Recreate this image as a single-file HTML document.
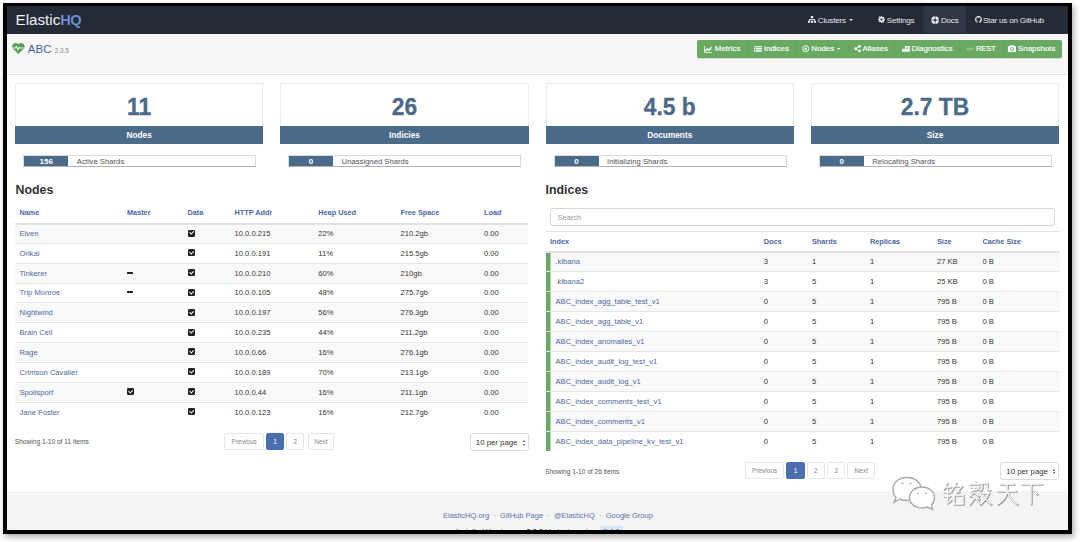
<!DOCTYPE html>
<html><head><meta charset="utf-8">
<style>
*{box-sizing:border-box;margin:0;padding:0}
html,body{width:1080px;height:542px;overflow:hidden;background:#fff;font-family:"Liberation Sans",sans-serif;}
.abs{position:absolute}
#frame{position:absolute;left:3px;top:2.6px;width:1069px;height:531px;background:#000;box-shadow:2px 3px 6px rgba(0,0,0,.33)}
#page{position:absolute;left:6.5px;top:6px;width:1061.5px;height:524px;background:#fff;overflow:hidden}
/* page coordinates are relative to #page, so subtract 6.5 */
#nav{position:absolute;left:0;top:0;width:100%;height:28px;background:#242b37}
#logo{position:absolute;left:9px;top:5.3px;font-size:15.2px;color:#eef0f3;letter-spacing:0}
#logo b{color:#6b8dd0;letter-spacing:-0.5px;font-size:14.6px}
.nv{position:absolute;top:0;height:28px;line-height:29.2px;font-size:8.1px;letter-spacing:-.2px;color:#e4e6ea;white-space:nowrap}
#subnav{position:absolute;left:0;top:28px;width:100%;height:40.5px;background:#f7f7f8;border-bottom:1px solid #e5e5e5}
#abc{position:absolute;left:21.3px;top:8.7px;font-size:11.5px;color:#4b5f96;white-space:nowrap}
#abc small{font-size:6.4px;color:#888;letter-spacing:0}
#btns{position:absolute;left:690.5px;top:33.5px;width:365px;height:18px;background:#69a962;border-radius:2px;box-shadow:0 1px 0 rgba(0,0,0,.12)}
.bt{position:absolute;top:0;height:18px;line-height:18.6px;font-size:7.95px;color:#fff;white-space:nowrap;-webkit-text-stroke:.15px #fff}
.dv{position:absolute;top:0;width:1px;height:18px;background:#65a35e}
.card{position:absolute;top:76.5px;width:248.3px;height:61px;border:1px solid #e6ecf0;background:#fff}
.card .num{position:absolute;left:0;right:0;top:9.4px;text-align:center;font-weight:bold;font-size:22.8px;color:#4a6a8a;transform:scaleY(1.08);-webkit-text-stroke:0.3px #4a6a8a}
.card .tt{position:absolute;left:-1px;right:-1px;top:41.5px;height:18.5px;line-height:18px;text-align:center;font-weight:bold;font-size:8.3px;color:#fff;background:#4b6b8b}
.prog{position:absolute;top:148.5px;width:233px;height:12px;border:1px solid #dcdcdc;border-bottom-color:#b4b4b4;background:#fff;font-size:7.7px;line-height:11px;color:#555;white-space:nowrap}
.prog .fill{position:absolute;left:0;top:0;width:44px;height:10px;line-height:11.5px;font-size:8px;background:#4b6b8b;color:#fff;text-align:center;font-weight:bold}
.prog .lbl{position:absolute;top:0}
h2{position:absolute;font-size:12.4px;font-weight:bold;color:#333;top:176.6px}
table{position:absolute;border-collapse:collapse;font-size:7.6px;color:#333}
th{font-weight:bold;color:#4a68a8;text-align:left;height:0;padding:0;font-size:7.3px}
td{padding:0;height:20px;vertical-align:middle;border-top:1px solid #e7e7e7}
tr.s td{background:#f9f9f9}
a{color:#4e67a0;text-decoration:none}
.chk{display:inline-block;width:7px;height:7px;background:#222;border-radius:1.2px;position:relative;vertical-align:middle;top:-1.1px;margin-left:0.3px}
.chk:after{content:"";position:absolute;left:2.2px;top:0.9px;width:1.8px;height:3.4px;border:solid #fff;border-width:0 1.1px 1.1px 0;transform:rotate(45deg)}
.dash{display:inline-block;width:6.4px;height:2px;background:#222;vertical-align:middle;position:relative;top:-1px;margin-left:-0.3px;border-radius:.5px}
.pg{position:absolute;height:17px;border:1px solid #e6e6e6;border-radius:2px;background:#fff;color:#888;font-size:6.5px;line-height:15px;text-align:center}
.pg.act{background:#4a6fae;border-color:#4a6fae;color:#fff}
.sel{position:absolute;height:18.5px;border:1px solid #dcdcdc;border-radius:3px;background:#fff;font-size:7.8px;line-height:18px;color:#333;padding-left:5px}
.showing{position:absolute;font-size:6.6px;color:#555;margin-top:.6px}
#footer{position:absolute;left:0;top:484.5px;width:100%;height:40px;background:#f4f4f4}
.search{position:absolute;border:1px solid #d8d8d8;border-radius:2px;background:#fff;color:#999;font-size:7.5px;line-height:17px;padding-left:6.5px}
td.g{box-shadow:inset 4.5px 0 0 #6aaa63;padding-left:10px}
td,th{padding-left:4.5px}
#nt th{height:22px;border-bottom:2px solid #e2e2e2;vertical-align:middle}
#it th{height:21px;border-top:1px solid #e2e2e2;border-bottom:2px solid #e2e2e2;vertical-align:middle}
.car{position:absolute;right:1.5px;top:6px;width:3.2px;height:5.8px}
.car:before,.car:after{content:"";position:absolute;left:0;border-left:1.6px solid transparent;border-right:1.6px solid transparent}
.car:before{top:0;border-bottom:2.5px solid #444}
.car:after{bottom:0;border-top:2.5px solid #444}
.flinks{position:absolute;left:436.5px;top:20px;font-size:7.5px;color:#777;white-space:nowrap}
.flinks a{color:#5a76b0}
.fver{position:absolute;left:449.5px;top:36px;font-size:7.5px;color:#333;white-space:nowrap}
.badge{background:#d9e6f5;color:#5a76b0;padding:1px 3px;border-radius:2px}
#it tr:nth-child(2) td{height:19px}
#nt td{height:19.85px}
</style></head><body>
<div id="frame"></div>
<div id="page">
  <div id="nav">
    <div id="logo">Elastic<b>HQ</b></div>
    <svg class="abs" style="left:801.6px;top:10.4px" width="8" height="7" viewBox="0 0 8 7"><g fill="#e4e6ea"><rect x="2.8" y="0" width="2.4" height="2"/><rect x="3.6" y="2" width="0.8" height="1.6"/><rect x="1" y="3.2" width="6" height="0.8"/><rect x="1" y="3.2" width="0.8" height="1.4"/><rect x="6.2" y="3.2" width="0.8" height="1.4"/><rect x="0" y="4.6" width="2.2" height="2.2"/><rect x="2.9" y="4.6" width="2.2" height="2.2"/><rect x="5.8" y="4.6" width="2.2" height="2.2"/></g></svg>
    <div class="nv" style="left:811.3px">Clusters</div>
    <svg class="abs" style="left:842.5px;top:13.2px" width="4.2" height="2" viewBox="0 0 4 2"><path d="M0 0H4L2 2Z" fill="#e4e6ea"/></svg>
    <svg class="abs" style="left:871.5px;top:10.4px" width="7" height="7" viewBox="0 0 14 14"><g fill="#e4e6ea"><path d="M6 0h2l.4 2a5 5 0 0 1 1.6.7l1.7-1.2 1.4 1.4-1.2 1.7A5 5 0 0 1 12 6.2l2 .4v2l-2 .4a5 5 0 0 1-.7 1.6l1.2 1.7-1.4 1.4-1.7-1.2a5 5 0 0 1-1.6.7L8 14H6l-.4-2a5 5 0 0 1-1.6-.7l-1.7 1.2-1.4-1.4 1.2-1.7A5 5 0 0 1 2 8L0 7.6v-2L2 5.2a5 5 0 0 1 .7-1.6L1.5 1.9 2.9.5l1.7 1.2A5 5 0 0 1 6.2 1z"/></g><circle cx="7" cy="7" r="2.2" fill="#232a36"/></svg>
    <div class="nv" style="left:880.3px">Settings</div>
    <div class="abs" style="left:916px;top:0;width:43.7px;height:27px;background:#2f3746"></div>
    <svg class="abs" style="left:924.4px;top:9.6px" width="8.2" height="8.2" viewBox="0 0 16 16"><circle cx="8" cy="8" r="7.6" fill="#e8eaee"/><g fill="#2f3746" opacity=".75"><rect x="7.2" y="0" width="1.6" height="16"/><rect x="0" y="7.2" width="16" height="1.6"/></g><circle cx="8" cy="8" r="2.3" fill="#2f3746"/></svg>
    <div class="nv" style="left:934.4px">Docs</div>
    <svg class="abs" style="left:968.2px;top:10.2px" width="7" height="7" viewBox="0 0 16 16"><path fill="#e4e6ea" d="M8 0C3.58 0 0 3.58 0 8c0 3.54 2.29 6.53 5.47 7.59.4.07.55-.17.55-.38 0-.19-.01-.82-.01-1.49-2.01.37-2.53-.49-2.69-.94-.09-.23-.48-.94-.82-1.13-.28-.15-.68-.52-.01-.53.63-.01 1.08.58 1.23.82.72 1.21 1.87.87 2.33.66.07-.52.28-.87.51-1.07-1.78-.2-3.64-.89-3.64-3.95 0-.87.31-1.59.82-2.15-.08-.2-.36-1.02.08-2.12 0 0 .67-.21 2.2.82.64-.18 1.32-.27 2-.27.68 0 1.36.09 2 .27 1.53-1.04 2.2-.82 2.2-.82.44 1.1.16 1.92.08 2.12.51.56.82 1.27.82 2.15 0 3.07-1.87 3.75-3.65 3.95.29.25.54.73.54 1.48 0 1.07-.01 1.93-.01 2.2 0 .21.15.46.55.38A8.013 8.013 0 0016 8c0-4.42-3.58-8-8-8z"/></svg>
    <div class="nv" style="left:976.4px">Star us on GitHub</div>
  </div>
  <div id="subnav">
    <svg class="abs" style="left:5.4px;top:8.8px" width="12.7" height="11" viewBox="0 0 24 21"><path fill="#5c9d5a" d="M12 21 2.2 11.6C-.8 8.6-.6 3.8 2.6 1.4 5.4-.7 9.6-.2 12 2.6 14.4-.2 18.6-.7 21.4 1.4c3.2 2.4 3.4 7.2.4 10.2z"/><path d="M1 9.5h5.5l1.8-3.5 2.8 7.5 2.4-5.5 1.4 1.5h7.6" fill="none" stroke="#e4f5e2" stroke-width="2" stroke-linejoin="round"/></svg>
    <div id="abc">ABC <small>2.3.5</small></div>
  </div>
  <div id="body" style="position:absolute;left:0;top:0.5px;width:100%;height:100%">
  <div id="btns">
    <svg class="abs" style="left:7px;top:5.5px" width="8" height="7" viewBox="0 0 16 14"><path d="M1 0v13h15" fill="none" stroke="#e8f3e6" stroke-width="1.8"/><path d="M3 10.5l4-5 3 3L15 2.5" fill="none" stroke="#fff" stroke-width="2.8"/></svg>
    <div class="bt" style="left:17.8px">Metrics</div>
    <div class="dv" style="left:49.6px"></div>
    <svg class="abs" style="left:57.2px;top:5.7px" width="7.8" height="6.6" viewBox="0 0 16 13"><g fill="#fff"><rect x="0" y="0" width="3" height="2.4"/><rect x="4.2" y="0" width="11.8" height="2.4"/><rect x="0" y="3.6" width="3" height="2.4"/><rect x="4.2" y="3.6" width="11.8" height="2.4"/><rect x="0" y="7.2" width="3" height="2.4"/><rect x="4.2" y="7.2" width="11.8" height="2.4"/><rect x="0" y="10.6" width="3" height="2.4"/><rect x="4.2" y="10.6" width="11.8" height="2.4"/></g></svg>
    <div class="bt" style="left:66.8px">Indices</div>
    <div class="dv" style="left:98.6px"></div>
    <svg class="abs" style="left:105.2px;top:5.3px" width="7.4" height="7.4" viewBox="0 0 16 16"><circle cx="8" cy="8" r="6.6" fill="none" stroke="#fff" stroke-width="2"/><circle cx="8" cy="8" r="2.8" fill="#fff"/></svg>
    <div class="bt" style="left:114.3px">Nodes</div>
    <svg class="abs" style="left:139.6px;top:8.4px" width="3.6" height="1.8" viewBox="0 0 4 2"><path d="M0 0H4L2 2Z" fill="#fff"/></svg>
    <div class="dv" style="left:152.2px"></div>
    <svg class="abs" style="left:156.6px;top:5.3px" width="7.2" height="7.4" viewBox="0 0 14 15"><g fill="#fff"><circle cx="11" cy="2.8" r="2.8"/><circle cx="3" cy="7.5" r="2.8"/><circle cx="11" cy="12.2" r="2.8"/></g><path d="M11 2.8 3 7.5l8 4.7" fill="none" stroke="#fff" stroke-width="1.6"/></svg>
    <div class="bt" style="left:165.4px">Aliases</div>
    <div class="dv" style="left:197.1px"></div>
    <svg class="abs" style="left:205px;top:5.8px" width="8" height="6" viewBox="0 0 16 12"><path fill="#fff" d="M6 0h9.5v11.5H0V5.5h6z"/><circle cx="10.5" cy="4.2" r="2.2" fill="#69a962" opacity=".8"/><circle cx="3.5" cy="6.5" r="1.2" fill="#69a962" opacity=".6"/></svg>
    <div class="bt" style="left:214.6px">Diagnostics</div>
    <div class="dv" style="left:262.2px"></div>
    <div class="bt" style="left:269px;font-size:6px;color:rgba(255,255,255,.7);-webkit-text-stroke:0;letter-spacing:-.3px">&lt;/&gt;</div>
    <div class="bt" style="left:279px;letter-spacing:-.4px">REST</div>
    <div class="dv" style="left:306.2px"></div>
    <svg class="abs" style="left:311px;top:5.2px" width="8.3" height="7.2" viewBox="0 0 17 14"><path fill="#fff" d="M5 0h7l1.4 2.2H17V14H0V2.2h3.6z"/><circle cx="8.5" cy="8" r="3.8" fill="#69a962"/><circle cx="8.5" cy="8" r="2.3" fill="#fff"/></svg>
    <div class="bt" style="left:321px">Snapshots</div>
  </div>

  <div class="card" style="left:8.5px"><div class="num">11</div><div class="tt">Nodes</div></div>
  <div class="card" style="left:273.8px"><div class="num">26</div><div class="tt">Indicies</div></div>
  <div class="card" style="left:539.1px"><div class="num">4.5 b</div><div class="tt">Documents</div></div>
  <div class="card" style="left:804.4px"><div class="num">2.7 TB</div><div class="tt">Size</div></div>

  <div class="prog" style="left:16.8px"><div class="fill">156</div><div class="lbl" style="left:52.5px">Active Shards</div></div>
  <div class="prog" style="left:281.6px"><div class="fill">0</div><div class="lbl" style="left:52.5px">Unassigned Shards</div></div>
  <div class="prog" style="left:547px"><div class="fill">0</div><div class="lbl" style="left:52.5px">Initializing Shards</div></div>
  <div class="prog" style="left:812.2px"><div class="fill">0</div><div class="lbl" style="left:52.5px">Relocating Shards</div></div>

  <h2 style="left:9px">Nodes</h2>
  <h2 style="left:539px">Indices</h2>
  <table id="nt" style="left:8.5px;top:195px;width:513.3px">
    <colgroup><col style="width:107.5px"><col style="width:60.5px"><col style="width:47px"><col style="width:83.8px"><col style="width:82.2px"><col style="width:83.5px"><col style="width:48.8px"></colgroup>
    <tr class="hd"><th>Name</th><th>Master</th><th>Data</th><th>HTTP Addr</th><th>Heap Used</th><th>Free Space</th><th>Load</th></tr>
    <tr class="s"><td><a>Elven</a></td><td></td><td><span class="chk"></span></td><td>10.0.0.215</td><td>22%</td><td>210.2gb</td><td>0.00</td></tr>
    <tr><td><a>Orikal</a></td><td></td><td><span class="chk"></span></td><td>10.0.0.191</td><td>11%</td><td>215.5gb</td><td>0.00</td></tr>
    <tr class="s"><td><a>Tinkerer</a></td><td><span class="dash"></span></td><td><span class="chk"></span></td><td>10.0.0.210</td><td>60%</td><td>210gb</td><td>0.00</td></tr>
    <tr><td><a>Trip Monroe</a></td><td><span class="dash"></span></td><td><span class="chk"></span></td><td>10.0.0.105</td><td>48%</td><td>275.7gb</td><td>0.00</td></tr>
    <tr class="s"><td><a>Nightwind</a></td><td></td><td><span class="chk"></span></td><td>10.0.0.197</td><td>56%</td><td>276.3gb</td><td>0.00</td></tr>
    <tr><td><a>Brain Cell</a></td><td></td><td><span class="chk"></span></td><td>10.0.0.235</td><td>44%</td><td>211.2gb</td><td>0.00</td></tr>
    <tr class="s"><td><a>Rage</a></td><td></td><td><span class="chk"></span></td><td>10.0.0.66</td><td>16%</td><td>276.1gb</td><td>0.00</td></tr>
    <tr><td><a>Crimson Cavalier</a></td><td></td><td><span class="chk"></span></td><td>10.0.0.189</td><td>70%</td><td>213.1gb</td><td>0.00</td></tr>
    <tr class="s"><td><a>Spoilsport</a></td><td><span class="chk"></span></td><td><span class="chk"></span></td><td>10.0.0.44</td><td>16%</td><td>211.1gb</td><td>0.00</td></tr>
    <tr><td><a>Jane Foster</a></td><td></td><td><span class="chk"></span></td><td>10.0.0.123</td><td>16%</td><td>212.7gb</td><td>0.00</td></tr>
  </table>
  <table id="it" style="left:539px;top:224px;width:514px">
    <colgroup><col style="width:213.8px"><col style="width:48.2px"><col style="width:58px"><col style="width:67px"><col style="width:45.5px"><col style="width:81.5px"></colgroup>
    <tr class="hd"><th>Index</th><th>Docs</th><th>Shards</th><th>Replicas</th><th>Size</th><th>Cache Size</th></tr>
    <tr class="s"><td class="g"><a>.kibana</a></td><td>3</td><td>1</td><td>1</td><td>27 KB</td><td>0 B</td></tr>
    <tr><td class="g"><a>.kibana2</a></td><td>3</td><td>5</td><td>1</td><td>25 KB</td><td>0 B</td></tr>
    <tr class="s"><td class="g"><a>ABC_index_agg_table_test_v1</a></td><td>0</td><td>5</td><td>1</td><td>795 B</td><td>0 B</td></tr>
    <tr><td class="g"><a>ABC_index_agg_table_v1</a></td><td>0</td><td>5</td><td>1</td><td>795 B</td><td>0 B</td></tr>
    <tr class="s"><td class="g"><a>ABC_index_anomalies_v1</a></td><td>0</td><td>5</td><td>1</td><td>795 B</td><td>0 B</td></tr>
    <tr><td class="g"><a>ABC_index_audit_log_test_v1</a></td><td>0</td><td>5</td><td>1</td><td>795 B</td><td>0 B</td></tr>
    <tr class="s"><td class="g"><a>ABC_index_audit_log_v1</a></td><td>0</td><td>5</td><td>1</td><td>795 B</td><td>0 B</td></tr>
    <tr><td class="g"><a>ABC_index_comments_test_v1</a></td><td>0</td><td>5</td><td>1</td><td>795 B</td><td>0 B</td></tr>
    <tr class="s"><td class="g"><a>ABC_index_comments_v1</a></td><td>0</td><td>5</td><td>1</td><td>795 B</td><td>0 B</td></tr>
    <tr><td class="g"><a>ABC_index_data_pipeline_kv_test_v1</a></td><td>0</td><td>5</td><td>1</td><td>795 B</td><td>0 B</td></tr>
  </table>
  <div class="search" style="left:543.5px;top:201px;width:504.5px;height:18.8px">Search</div>

  <div class="showing" style="left:8.3px;top:431px">Showing 1-10 of 11 items</div>
  <div class="pg" style="left:217.8px;top:426.3px;width:39.8px">Previous</div>
  <div class="pg act" style="left:259.9px;top:426.3px;width:17.5px">1</div>
  <div class="pg" style="left:279.7px;top:426.3px;width:18.3px">2</div>
  <div class="pg" style="left:301px;top:426.3px;width:26.8px">Next</div>
  <div class="sel" style="left:463.3px;top:426.3px;width:59px">10 per page<span class="car"></span></div>

  <div class="showing" style="left:538.5px;top:460.5px">Showing 1-10 of 26 items</div>
  <div class="pg" style="left:738.7px;top:455.2px;width:38.9px">Previous</div>
  <div class="pg act" style="left:779.9px;top:455.2px;width:18.3px">1</div>
  <div class="pg" style="left:800px;top:455.2px;width:18.5px">2</div>
  <div class="pg" style="left:820.8px;top:455.2px;width:17.6px">3</div>
  <div class="pg" style="left:840.7px;top:455.2px;width:28.2px">Next</div>
  <div class="sel" style="left:993.8px;top:455.2px;width:58.7px">10 per page<span class="car"></span></div>

  <div id="footer">
    <div class="flinks"><a>ElasticHQ.org</a> &nbsp;·&nbsp; <a>GitHub Page</a> &nbsp;·&nbsp; <a>@ElasticHQ</a> &nbsp;·&nbsp; <a>Google Group</a></div>
    <div class="fver">Installed Version: <span style="display:inline-block;width:11px"></span><b>3.3.0</b> | Latest version: <span class="badge">3.4.0</span></div>
  </div>
  <svg class="abs" style="left:878.5px;top:465.5px" width="170" height="46" viewBox="0 0 170 46">
    <defs>
      <g id="wmch" fill="none" stroke-linecap="round" stroke-linejoin="round">
        <g transform="translate(57,9)">
          <path d="M5 2 L2 8 M3 6 H9 M2 11 H9 M5.5 8 V22 M2 15 H8 M5.5 22 L9 19 M14 2 L10 9 M13 5 H20 L11 15 M14 8 L17 11 M12 14 H21 V23 H12 Z"/>
        </g>
        <g transform="translate(83,9)">
          <path d="M2 3 H12 M7 1 V3 M3 6 H11 M7 6 L3 11 M5 9 L11 8 M6 11 L2 15 M7 12 L11 15 M4 15 L11 18 M7 16 L2 23 M8 18 Q11 21 12 23 M14 2 V7 Q14 9 12 10 M14 2 H19 V7 Q19 9 22 9 M13 12 H21 Q18 18 13 23 M15 14 Q18 20 23 23"/>
        </g>
        <g transform="translate(110,9)">
          <path d="M5 3 H19 M3 10 H21 M12 3 V10 Q11 18 3 23 M12 10 Q15 18 22 23"/>
        </g>
        <g transform="translate(135,9)">
          <path d="M2 3 H22 M11 3 V23 M13 9 L17 13"/>
        </g>
      </g>
    </defs>
    <g transform="translate(.7,.8)" stroke="#9a9a9a" stroke-width="2.1"><use href="#wmch"/></g>
    <g stroke="#ffffff" stroke-width="1.3"><use href="#wmch"/></g>
    <g fill="#fff" stroke="#aaaaaa" stroke-width="1.4">
      <path d="M22 5.5 C30 5.5 36 10.5 36 17 C36 23.5 30 28.5 22 28.5 C19 28.5 16.5 28 14.5 27 L9 30.5 L11 25.5 C9 23.5 8 20.5 8 17 C8 10.5 14 5.5 22 5.5 Z"/>
      <path d="M37 15 C44 15 49.5 19.5 49.5 25.5 C49.5 28.5 48.5 31 46.5 33 L47.5 37.5 L42.5 35 C40.8 35.6 39 36 37 36 C30 36 24.5 31.5 24.5 25.5 C24.5 19.5 30 15 37 15 Z"/>
    </g>
    <g fill="#b8b8b8"><circle cx="17.5" cy="11.5" r="1.1"/><circle cx="25.5" cy="11.5" r="1.1"/><circle cx="33" cy="21.5" r="1"/><circle cx="41" cy="21.5" r="1"/></g>
  </svg>
  </div>
</div>
</body></html>
